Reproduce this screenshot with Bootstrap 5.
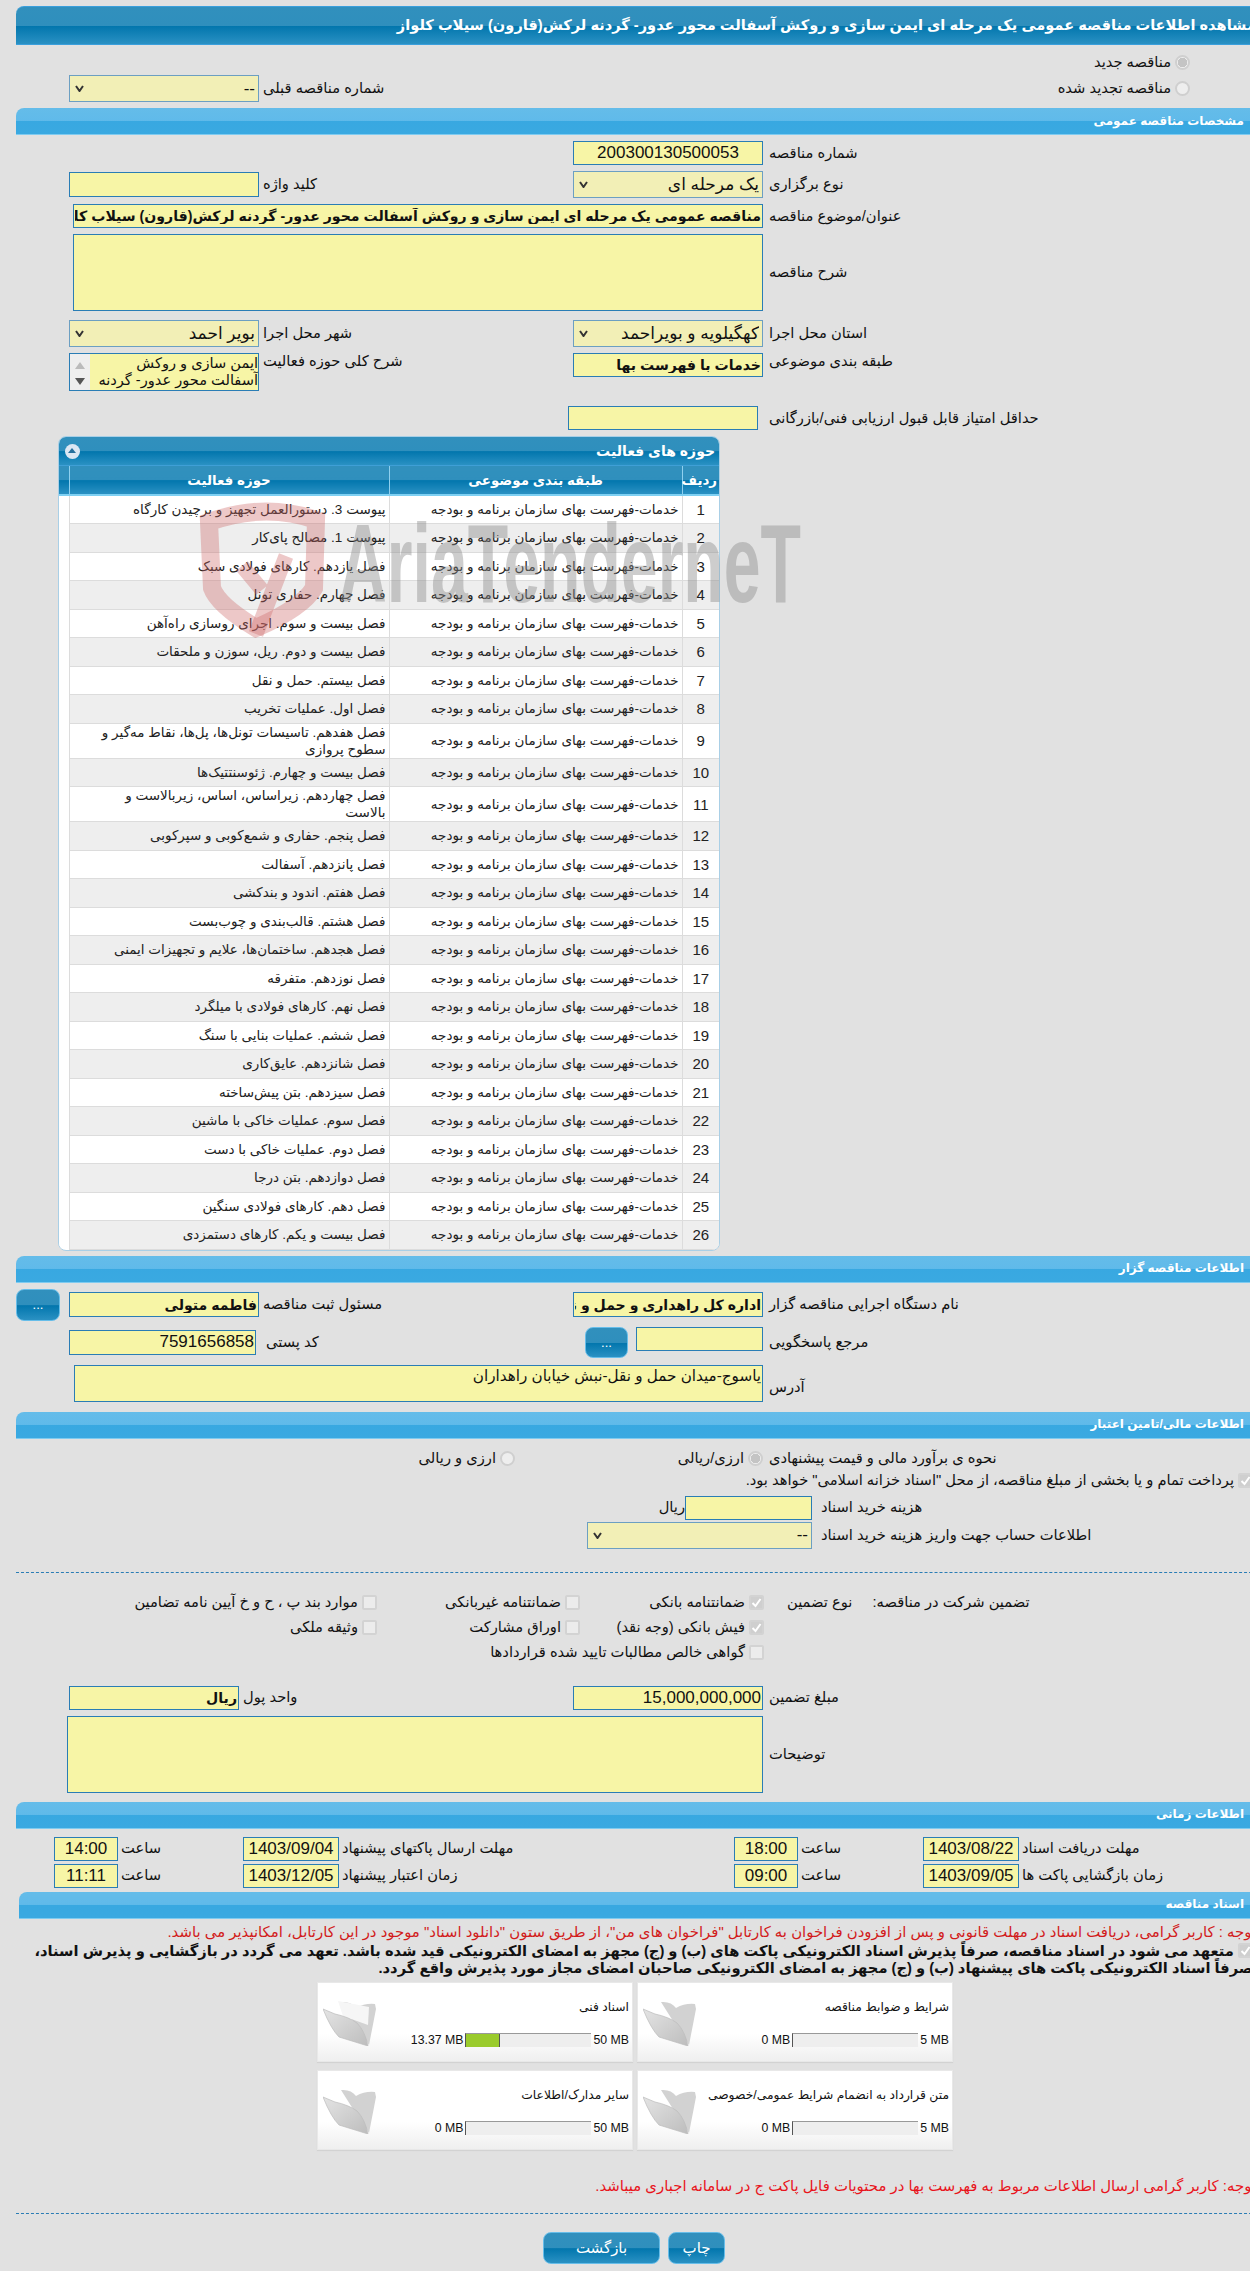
<!DOCTYPE html>
<html lang="fa" dir="rtl">
<head>
<meta charset="utf-8">
<title>مشاهده اطلاعات مناقصه</title>
<link href="https://cdn.jsdelivr.net/npm/bootstrap@5.3.0/dist/css/bootstrap.min.css" rel="stylesheet">
<style>
html,body{overflow-x:hidden}
body{background:#e1e1e1;color:#111;font-family:"Liberation Sans","DejaVu Sans",sans-serif;font-size:14.7px;line-height:17px;margin:0;padding-top:6px}
.pg{margin-left:16px;margin-right:-12px;position:relative}
.ttl{height:39px;display:flex;align-items:center;color:#fff;font-weight:700;font-size:14.6px;padding-right:6px;border-radius:8px 8px 0 0;white-space:nowrap;
 background:linear-gradient(#3190bd 0,#2f8fbd 50%,#0276ad 52%,#2a91c3 100%);border-top:1px solid #3a9fdc;border-bottom:1px solid #3a9fdc}
.sec{height:27px;display:flex;align-items:center;color:#fff;font-weight:700;font-size:12px;padding-right:18px;border-radius:8px 8px 0 0;
 background:linear-gradient(#64bce9 0,#60baea 48%,#38a8e1 50%,#3aa9e1 100%);border-bottom:1px solid #7fcbf0}
.frow{display:flex;align-items:center}
.top{align-items:flex-start}
.lb{text-align:left;padding-left:6px;flex:none}
.w499{width:499px}.w314{width:314px;padding-left:4px}
.inp,.inp.form-control{flex:none;display:block;background:#f7f5a6;border:1px solid #2a7db5;border-radius:0;height:24px;padding:0 1px;font-size:17px;line-height:20px;color:#111;box-shadow:none;min-height:0}
.inp.bold{font-weight:700;font-size:14.1px;overflow:hidden;white-space:nowrap}
.inp.txs{font-size:15.2px}
.sel,.sel.form-select{flex:none;height:27px;background-color:#f2efb6;border:1px solid #6c9fc2;border-radius:0;padding:0 3px 0 20px;font-size:17px;line-height:22px;color:#111;box-shadow:none;
 background-image:url("data:image/svg+xml,%3Csvg xmlns='http://www.w3.org/2000/svg' width='9' height='7'%3E%3Cpath d='M1 1l3.5 5L8 1' fill='none' stroke='%23333' stroke-width='2'/%3E%3C/svg%3E");background-position:left 5px center;background-size:9px 7px;background-repeat:no-repeat}
.w190{width:190px}.w127{width:127px}
.rad{appearance:none;width:15px;height:15px;border-radius:50%;background:#eee;border:2px solid #cfcfcf;flex:none;margin:0;display:inline-block}
.rad:checked{background:radial-gradient(circle,#c4c4c4 0 4.5px,#eee 5px)}
.chk{appearance:none;width:15px;height:15px;border-radius:2px;background:#ececec;border:2px solid #d3d3d3;flex:none;margin:0;display:inline-block}
.chk:checked{background:#cfcfcf url("data:image/svg+xml,%3Csvg xmlns='http://www.w3.org/2000/svg' width='11' height='11'%3E%3Cpath d='M1.5 6l3 3 5-7' fill='none' stroke='%23fff' stroke-width='2'/%3E%3C/svg%3E") center no-repeat}
.gbtn,.gbtn.btn{flex:none;color:#fff;border:1px solid #66bde9;border-radius:8px;padding:0;font-size:13px;line-height:1;background:linear-gradient(#3190bd 0,#2f8fbd 50%,#0276ad 52%,#2a91c3 100%)}
.pnlx{margin-right:542px;margin-top:6px;width:662px;border:1px solid #a9cfe6;border-radius:8px;background:#fff;overflow:hidden}
.phead{height:29px;color:#fff;font-weight:700;font-size:14px;padding:0 4px 0 6px;background:linear-gradient(#3190bd 0,#2f8fbd 50%,#0276ad 52%,#2a91c3 100%);border-bottom:1px solid #3f9fd6;justify-content:space-between}
.tog{width:15px;height:15px;border-radius:50%;background:#dce7f3;position:relative;flex:none}
.tog::after{content:"";position:absolute;left:3px;top:4px;border:4.5px solid transparent;border-top:0;border-bottom:5px solid #27709d}
.tbx{table-layout:fixed;margin:0;width:100%;--bs-table-bg:transparent;border-color:#dcdcdc}
.tbx th{height:29px;padding:0 2px;color:#fff;font-weight:700;font-size:13.4px;text-align:center;vertical-align:middle;border:0;border-left:1px solid #8fd0ef;box-shadow:none;background:linear-gradient(#3190bd 0,#2f8fbd 50%,#0276ad 52%,#2a91c3 100%);border-bottom:2px solid #7ed0f3}
.tbx th:last-child{border-left:0}
.tbx td{height:28.5px;padding:0 3px 0 6px;vertical-align:middle;text-align:right;font-size:13.5px;line-height:17px;color:#222;border:0;border-bottom:1px solid #dcdcdc;border-left:1px solid #dcdcdc;box-shadow:none;background:#fff}
.tbx td.nr{text-align:center;padding:0;font-size:15px}
.tbx tr:nth-child(even) td{background:#eee}
.tbx tr td:last-child{background:#fff!important;border-left:0;border-bottom:0}
.wm{position:absolute;left:174px;top:494px;pointer-events:none;width:630px;height:150px;z-index:5;direction:ltr;overflow:visible}
.wm text{font-family:"Liberation Sans",sans-serif;font-weight:700;font-size:112px;fill:#8a8a8a;opacity:.42}
.rd{color:#d21b1b;font-size:14.9px}
.brd{font-weight:700;font-size:14.7px;line-height:17px;white-space:nowrap}
.dash{border-top:1px dashed #2a7db5}
.fcard{width:316px;height:80px;background:linear-gradient(#fff 0,#fff 65%,#efefef 100%);border:1px solid #e8e8e8;flex:none;padding:5px 3px 0 4px;position:relative;box-shadow:0 1px 1px #d2d2d2}
.fhd{font-size:12.3px;line-height:16px;text-align:right;height:33px;margin-top:11px}
.fbar{display:flex;align-items:center;gap:2px;font-size:12.3px;flex:none}
.ftrk{width:126px;height:14px;background:#eee;border-top:1px solid #999;border-left:1px solid #555;display:block;direction:ltr;flex:none}
.ffill{display:block;height:100%;background:#9acb2c;border-right:1px solid #555}
.fico{position:absolute;left:5px;top:18px;width:53px;height:45px}
.mrw{margin-right:309px}
.g-l{width:498px;flex:none;display:flex;justify-content:flex-end;padding-left:23px;gap:20px}
.g1{width:184px;flex:none;display:flex;gap:4px;align-items:center}
.g2{width:203px;flex:none;display:flex;gap:4px;align-items:center}
.g3{display:flex;gap:4px;align-items:center}
.txs{resize:none}
.abox{width:190px;height:38px;display:flex;flex:none;background:#f7f5a6;border:1px solid #2a7db5;font-size:14.6px;line-height:17px;overflow:hidden}
.abtx{flex:1;text-align:right;padding-top:1px}
.absc{width:20px;flex:none;background:#eee;position:relative}
.absc::before{content:"";position:absolute;left:5px;top:8px;border:5px solid transparent;border-top:0;border-bottom:7px solid #bbb}
.absc::after{content:"";position:absolute;left:5px;top:24px;border:5px solid transparent;border-bottom:0;border-top:7px solid #555}
.m6{margin-top:6px}
</style>
</head>
<body>
<div class="pg">
  <div class="ttl">مشاهده اطلاعات مناقصه عمومی یک مرحله ای ایمن سازی و روکش آسفالت محور عدور- گردنه لرکش(قارون) سیلاب کلواز</div>

  <div class="frow gap-1" style="height:30px;padding-right:72px;padding-top:4px"><input class="rad" type="radio" checked disabled name="a"><span>مناقصه جدید</span></div>
  <div class="frow" style="height:27px">
    <div class="d-flex align-items-center gap-1 flex-none" style="width:693px;padding-right:72px"><input class="rad" type="radio" disabled name="a"><span>مناقصه تجدید شده</span></div>
    <div class="lb" style="width:310px;padding-left:4px">شماره مناقصه قبلی</div>
    <select class="form-select sel w190" disabled><option>--</option></select>
  </div>

  <div class="sec m6">مشخصات مناقصه عمومی</div>
  <div class="frow m6"><div class="lb w499">شماره مناقصه</div><input class="form-control inp w190 text-center" value="200300130500053" readonly></div>
  <div class="frow m6">
    <div class="lb w499">نوع برگزاری</div><select class="form-select sel w190" disabled><option>یک مرحله ای</option></select>
    <div class="lb w314">کلید واژه</div><input class="form-control inp w190" style="height:25px" readonly>
  </div>
  <div class="frow m6"><div class="lb w499">عنوان/موضوع مناقصه</div><input class="form-control inp bold" style="width:690px" value="مناقصه عمومی یک مرحله ای ایمن سازی و روکش آسفالت محور عدور- گردنه لرکش(قارون) سیلاب کلواز" readonly></div>
  <div class="frow m6"><div class="lb w499">شرح مناقصه</div><textarea class="form-control inp txs" style="width:690px;height:77px" readonly></textarea></div>
  <div class="frow" style="margin-top:9px">
    <div class="lb w499">استان محل اجرا</div><select class="form-select sel w190" disabled><option>کهگیلویه و بویراحمد</option></select>
    <div class="lb w314">شهر محل اجرا</div><select class="form-select sel w190" disabled><option>بویر احمد</option></select>
  </div>
  <div class="frow top m6">
    <div class="lb w499">طبقه بندی موضوعی</div><input class="form-control inp bold w190" value="خدمات با فهرست بها" readonly>
    <div class="lb w314">شرح کلی حوزه فعالیت</div>
    <div class="abox"><div class="abtx">ایمن سازی و روکش<br>آسفالت محور عدور- گردنه</div><div class="absc"></div></div>
  </div>
  <div class="frow" style="margin-top:15px"><div class="lb w499">حداقل امتیاز قابل قبول ارزیابی فنی/بازرگانی</div><input class="form-control inp w190" style="margin-right:5px" readonly></div>

  <div class="pnlx">
    <div class="frow phead"><span>حوزه های فعالیت</span><span class="tog"></span></div>
    <table class="table tbx">
      <colgroup><col style="width:37px"><col style="width:293px"><col style="width:320px"><col></colgroup>
      <thead><tr><th>ردیف</th><th>طبقه بندی موضوعی</th><th>حوزه فعالیت</th><th></th></tr></thead>
      <tbody>
      <tr><td class="nr">1</td><td>خدمات-فهرست بهای سازمان برنامه و بودجه</td><td>پیوست 3. دستورالعمل تجهیز و برچیدن کارگاه</td><td></td></tr>
      <tr><td class="nr">2</td><td>خدمات-فهرست بهای سازمان برنامه و بودجه</td><td>پیوست 1. مصالح پای‌کار</td><td></td></tr>
      <tr><td class="nr">3</td><td>خدمات-فهرست بهای سازمان برنامه و بودجه</td><td>فصل یازدهم. کارهای فولادی سبک</td><td></td></tr>
      <tr><td class="nr">4</td><td>خدمات-فهرست بهای سازمان برنامه و بودجه</td><td>فصل چهارم. حفاری تونل</td><td></td></tr>
      <tr><td class="nr">5</td><td>خدمات-فهرست بهای سازمان برنامه و بودجه</td><td>فصل بیست و سوم. اجرای روسازی راه‌آهن</td><td></td></tr>
      <tr><td class="nr">6</td><td>خدمات-فهرست بهای سازمان برنامه و بودجه</td><td>فصل بیست و دوم. ریل، سوزن و ملحقات</td><td></td></tr>
      <tr><td class="nr">7</td><td>خدمات-فهرست بهای سازمان برنامه و بودجه</td><td>فصل بیستم. حمل و نقل</td><td></td></tr>
      <tr><td class="nr">8</td><td>خدمات-فهرست بهای سازمان برنامه و بودجه</td><td>فصل اول. عملیات تخریب</td><td></td></tr>
      <tr><td class="nr">9</td><td>خدمات-فهرست بهای سازمان برنامه و بودجه</td><td>فصل هفدهم. تاسیسات تونل‌ها، پل‌ها، نقاط مه‌گیر و<br>سطوح پروازی</td><td></td></tr>
      <tr><td class="nr">10</td><td>خدمات-فهرست بهای سازمان برنامه و بودجه</td><td>فصل بیست و چهارم. ژئوسنتتیک‌ها</td><td></td></tr>
      <tr><td class="nr">11</td><td>خدمات-فهرست بهای سازمان برنامه و بودجه</td><td>فصل چهاردهم. زیراساس، اساس، زیربالاست  و<br>بالاست</td><td></td></tr>
      <tr><td class="nr">12</td><td>خدمات-فهرست بهای سازمان برنامه و بودجه</td><td>فصل پنجم. حفاری و شمع‌کوبی و سپرکوبی</td><td></td></tr>
      <tr><td class="nr">13</td><td>خدمات-فهرست بهای سازمان برنامه و بودجه</td><td>فصل پانزدهم. آسفالت</td><td></td></tr>
      <tr><td class="nr">14</td><td>خدمات-فهرست بهای سازمان برنامه و بودجه</td><td>فصل هفتم. اندود و بندکشی</td><td></td></tr>
      <tr><td class="nr">15</td><td>خدمات-فهرست بهای سازمان برنامه و بودجه</td><td>فصل هشتم. قالب‌بندی و چوب‌بست</td><td></td></tr>
      <tr><td class="nr">16</td><td>خدمات-فهرست بهای سازمان برنامه و بودجه</td><td>فصل هجدهم. ساختمان‌ها، علایم و تجهیزات ایمنی</td><td></td></tr>
      <tr><td class="nr">17</td><td>خدمات-فهرست بهای سازمان برنامه و بودجه</td><td>فصل نوزدهم. متفرقه</td><td></td></tr>
      <tr><td class="nr">18</td><td>خدمات-فهرست بهای سازمان برنامه و بودجه</td><td>فصل نهم. کارهای فولادی با میلگرد</td><td></td></tr>
      <tr><td class="nr">19</td><td>خدمات-فهرست بهای سازمان برنامه و بودجه</td><td>فصل ششم. عملیات بنایی با سنگ</td><td></td></tr>
      <tr><td class="nr">20</td><td>خدمات-فهرست بهای سازمان برنامه و بودجه</td><td>فصل شانزدهم. عایق‌کاری</td><td></td></tr>
      <tr><td class="nr">21</td><td>خدمات-فهرست بهای سازمان برنامه و بودجه</td><td>فصل سیزدهم. بتن پیش‌ساخته</td><td></td></tr>
      <tr><td class="nr">22</td><td>خدمات-فهرست بهای سازمان برنامه و بودجه</td><td>فصل سوم. عملیات خاکی با ماشین</td><td></td></tr>
      <tr><td class="nr">23</td><td>خدمات-فهرست بهای سازمان برنامه و بودجه</td><td>فصل دوم. عملیات خاکی با دست</td><td></td></tr>
      <tr><td class="nr">24</td><td>خدمات-فهرست بهای سازمان برنامه و بودجه</td><td>فصل دوازدهم. بتن درجا</td><td></td></tr>
      <tr><td class="nr">25</td><td>خدمات-فهرست بهای سازمان برنامه و بودجه</td><td>فصل دهم. کارهای فولادی سنگین</td><td></td></tr>
      <tr><td class="nr">26</td><td>خدمات-فهرست بهای سازمان برنامه و بودجه</td><td>فصل بیست و یکم. کارهای دستمزدی</td><td></td></tr>
      </tbody>
    </table>
  </div>
  <svg class="wm" viewBox="0 0 630 150" aria-hidden="true">
    <path d="M19 22Q75 2 126 20L124 88Q112 108 66 128Q28 105 22 88Z" fill="none" stroke="#c66" stroke-opacity=".36" stroke-width="18"/>
    <path d="M96 56L66 134M52 66L72 90" fill="none" stroke="#c66" stroke-opacity=".36" stroke-width="15"/>
    <text x="149" y="102" textLength="462" lengthAdjust="spacingAndGlyphs">AriaTenderneT</text>
  </svg>

  <div class="sec" style="margin-top:5px">اطلاعات مناقصه گزار</div>
  <div class="frow m6" style="height:32px">
    <div class="lb w499">نام دستگاه اجرایی مناقصه گزار</div><input class="form-control inp bold w190" style="height:25px" value="اداره کل راهداری و حمل و نقل جاده ای" readonly>
    <div class="lb w314">مسئول ثبت مناقصه</div><input class="form-control inp bold w190" style="height:25px" value="فاطمه متولی" readonly>
    <button type="button" class="btn gbtn" style="width:44px;height:32px;margin-right:9px">...</button>
  </div>
  <div class="frow top m6" style="height:31px">
    <div class="lb w499" style="padding-top:7px">مرجع پاسخگویی</div><input class="form-control inp w127" readonly>
    <button type="button" class="btn gbtn" style="width:43px;height:31px;margin-right:8px">...</button>
    <div class="lb" style="width:329px;padding-left:10px;padding-top:7px">کد پستی</div><input class="form-control inp" style="width:187px;height:25px;margin-top:3px" value="7591656858" readonly>
  </div>
  <div class="frow" style="margin-top:7px"><div class="lb w499" style="padding-top:8px">آدرس</div><textarea class="form-control inp txs" style="width:689px;height:37px" readonly>یاسوج-میدان حمل و نقل-نبش خیابان راهداران</textarea></div>

  <div class="sec" style="margin-top:10px">اطلاعات مالی/تامین اعتبار</div>
  <div class="frow" style="height:28px;margin-top:6px">
    <div class="lb w499">نحوه ی برآورد مالی و قیمت پیشنهادی</div>
    <div class="d-flex align-items-center gap-1" style="width:248px;flex:none"><input class="rad" type="radio" checked disabled name="b"><span>ارزی/ریالی</span></div>
    <div class="d-flex align-items-center gap-1"><input class="rad" type="radio" disabled name="b"><span>ارزی و ریالی</span></div>
  </div>
  <div class="frow gap-1" style="height:20px;margin-top:-2px;padding-right:9px"><input class="chk" type="checkbox" checked disabled><span>پرداخت تمام و یا بخشی از مبلغ مناقصه، از محل "اسناد خزانه اسلامی" خواهد بود.</span></div>
  <div class="frow" style="margin-top:5px"><div class="lb" style="width:450px;padding-left:9px">هزینه خرید اسناد</div><input class="form-control inp w127" readonly><span class="ms-0">ریال</span></div>
  <div class="frow" style="margin-top:2px"><div class="lb" style="width:450px;padding-left:9px">اطلاعات حساب جهت واریز هزینه خرید اسناد</div><select class="form-select sel" style="width:225px" disabled><option>--</option></select></div>

  <div class="dash" style="margin-top:23px"></div>
  <div class="frow" style="margin-top:20px;height:19px">
    <div class="g-l"><span>تضمین شرکت در مناقصه:</span><span>نوع تضمین</span></div>
    <div class="g1"><input class="chk" type="checkbox" checked disabled><span>ضمانتنامه بانکی</span></div>
    <div class="g2"><input class="chk" type="checkbox" disabled><span>ضمانتنامه غیربانکی</span></div>
    <div class="g3"><input class="chk" type="checkbox" disabled><span>موارد بند پ ، ح و خ آیین نامه تضامین</span></div>
  </div>
  <div class="frow" style="margin-top:6px;height:19px">
    <div class="g-l"></div>
    <div class="g1"><input class="chk" type="checkbox" checked disabled><span>فیش بانکی (وجه نقد)</span></div>
    <div class="g2"><input class="chk" type="checkbox" disabled><span>اوراق مشارکت</span></div>
    <div class="g3"><input class="chk" type="checkbox" disabled><span>وثیقه ملکی</span></div>
  </div>
  <div class="frow" style="margin-top:6px;height:19px">
    <div class="g-l"></div>
    <div class="g1 flex-grow-1"><input class="chk" type="checkbox" disabled><span>گواهی خالص مطالبات تایید شده قراردادها</span></div>
  </div>

  <div class="frow" style="margin-top:24px">
    <div class="lb w499">مبلغ تضمین</div><input class="form-control inp w190" value="15,000,000,000" readonly>
    <div class="lb" style="width:334px;padding-left:4px">واحد پول</div><input class="form-control inp bold" style="width:170px" value="ریال" readonly>
  </div>
  <div class="frow m6"><div class="lb w499">توضیحات</div><textarea class="form-control inp txs" style="width:696px;height:77px" readonly></textarea></div>

  <div class="sec" style="margin-top:9px">اطلاعات زمانی</div>
  <div class="frow" style="margin-top:8px">
    <div class="lb" style="width:243px;padding-left:3px">مهلت دریافت اسناد</div><input class="form-control inp text-center" style="width:96px" value="1403/08/22" readonly>
    <div class="lb" style="width:125px;padding-left:3px">ساعت</div><input class="form-control inp text-center" style="width:64px" value="18:00" readonly>
    <div class="lb" style="width:395px;padding-left:3px">مهلت ارسال پاکتهای پیشنهاد</div><input class="form-control inp text-center" style="width:96px" value="1403/09/04" readonly>
    <div class="lb" style="width:125px;padding-left:3px">ساعت</div><input class="form-control inp text-center" style="width:64px" value="14:00" readonly>
  </div>
  <div class="frow" style="margin-top:3px">
    <div class="lb" style="width:243px;padding-left:3px">زمان بازگشایی پاکت ها</div><input class="form-control inp text-center" style="width:96px" value="1403/09/05" readonly>
    <div class="lb" style="width:125px;padding-left:3px">ساعت</div><input class="form-control inp text-center" style="width:64px" value="09:00" readonly>
    <div class="lb" style="width:395px;padding-left:3px">زمان اعتبار پیشنهاد</div><input class="form-control inp text-center" style="width:96px" value="1403/12/05" readonly>
    <div class="lb" style="width:125px;padding-left:3px">ساعت</div><input class="form-control inp text-center" style="width:64px" value="11:11" readonly>
  </div>

  <div class="sec" style="margin-top:4px;margin-left:2.5px">اسناد مناقصه</div>
  <div class="rd" style="margin-top:5px;white-space:nowrap;padding-right:6px">توجه : کاربر گرامی، دریافت اسناد در مهلت قانونی و پس از افزودن فراخوان به کارتابل "فراخوان های من"، از طریق ستون "دانلود اسناد" موجود در این کارتابل، امکانپذیر می باشد.</div>
  <div class="brd" style="margin-top:2px;padding-right:9px"><input class="chk align-text-top" type="checkbox" checked disabled> متعهد می شود در اسناد مناقصه، صرفاً پذیرش اسناد الکترونیکی پاکت های (ب) و (ج) مجهز به امضای الکترونیکی قید شده باشد. تعهد می گردد در بازگشایی و پذیرش اسناد،<br>صرفاً اسناد الکترونیکی پاکت های پیشنهاد (ب) و (ج) مجهز به امضای الکترونیکی صاحبان امضای مجاز مورد پذیرش واقع گردد.</div>

  <div class="d-flex gap-1 mrw" style="margin-top:5px">
    <div class="fcard">
      <div class="fhd">شرایط و ضوابط مناقصه</div>
      <div class="fbar"><span dir="ltr">5 MB</span><span class="ftrk"></span><span dir="ltr">0 MB</span></div>
      <svg class="fico" viewBox="0 0 53 45"><defs><linearGradient id="fg" x1="0" y1="0" x2="1" y2="1"><stop offset="0" stop-color="#e4e4e4"/><stop offset="1" stop-color="#bdbdbd"/></linearGradient></defs><path d="M18 1Q28 0 33 7Q42 2 52 3L53 8L46 44L30 20Z" fill="#d2d2d2"/><path d="M0 8L12 13Q26 16 34 22Q42 30 45 45L16 36Q8 28 0 8Z" fill="url(#fg)" stroke="#bcbcbc" stroke-width=".7"/></svg>
    </div>
    <div class="fcard">
      <div class="fhd">اسناد فنی</div>
      <div class="fbar"><span dir="ltr">50 MB</span><span class="ftrk"><span class="ffill" style="width:27%"></span></span><span dir="ltr">13.37 MB</span></div>
      <svg class="fico" viewBox="0 0 53 45"><path d="M18 1Q28 0 33 7Q42 2 52 3L53 8L46 44L30 20Z" fill="#d2d2d2"/><path d="M15 0L46 6L45 24L20 15Z" fill="#f6f6f6"/><path d="M0 8L12 13Q26 16 34 22Q42 30 45 45L16 36Q8 28 0 8Z" fill="url(#fg)" stroke="#bcbcbc" stroke-width=".7"/></svg>
    </div>
  </div>
  <div class="d-flex gap-1 mrw" style="margin-top:8px">
    <div class="fcard">
      <div class="fhd">متن قرارداد به انضمام شرایط عمومی/خصوصی</div>
      <div class="fbar"><span dir="ltr">5 MB</span><span class="ftrk"></span><span dir="ltr">0 MB</span></div>
      <svg class="fico" viewBox="0 0 53 45"><path d="M18 1Q28 0 33 7Q42 2 52 3L53 8L46 44L30 20Z" fill="#d2d2d2"/><path d="M0 8L12 13Q26 16 34 22Q42 30 45 45L16 36Q8 28 0 8Z" fill="url(#fg)" stroke="#bcbcbc" stroke-width=".7"/></svg>
    </div>
    <div class="fcard">
      <div class="fhd">سایر مدارک/اطلاعات</div>
      <div class="fbar"><span dir="ltr">50 MB</span><span class="ftrk"></span><span dir="ltr">0 MB</span></div>
      <svg class="fico" viewBox="0 0 53 45"><path d="M18 1Q28 0 33 7Q42 2 52 3L53 8L46 44L30 20Z" fill="#d2d2d2"/><path d="M0 8L12 13Q26 16 34 22Q42 30 45 45L16 36Q8 28 0 8Z" fill="url(#fg)" stroke="#bcbcbc" stroke-width=".7"/></svg>
    </div>
  </div>

  <div class="rd" style="margin-top:28px;color:#e8141c;white-space:nowrap;padding-right:6px">توجه: کاربر گرامی ارسال اطلاعات مربوط به فهرست بها در محتویات فایل پاکت ج در سامانه اجباری میباشد.</div>
  <div class="dash" style="margin-top:18px"></div>
  <div class="d-flex gap-2" style="margin-top:18px;margin-right:537px">
    <button type="button" class="btn gbtn" style="width:57px;height:32px;font-size:15px">چاپ</button>
    <button type="button" class="btn gbtn" style="width:117px;height:32px;font-size:15px">بازگشت</button>
  </div>
</div>
<script src="https://cdn.jsdelivr.net/npm/bootstrap@5.3.0/dist/js/bootstrap.bundle.min.js"></script>
</body>
</html>
